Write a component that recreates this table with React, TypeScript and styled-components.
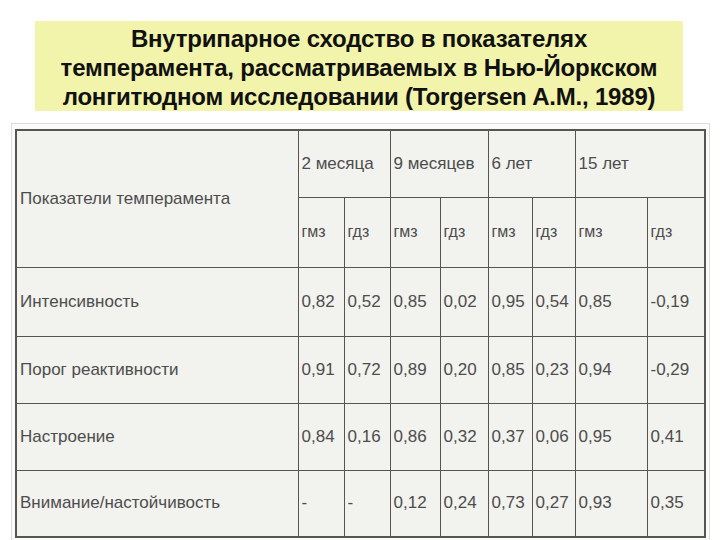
import { Fragment } from "react";
import styled, { createGlobalStyle } from "styled-components";

const GlobalStyle = createGlobalStyle`
  html, body {
    margin: 0;
    padding: 0;
    background: #ffffff;
  }
`;

const Page = styled.div`
  width: 720px;
  height: 540px;
  overflow: hidden;
  display: flex;
  flex-direction: column;
  align-items: flex-start;
  font-family: "Liberation Sans", Arial, sans-serif;
`;

const TitleBox = styled.div`
  margin: 21px 0 0 35px;
  width: 648px;
  height: 90px;
  background: #f2f4ab;
  display: flex;
  align-items: center;
  justify-content: center;
`;

const Title = styled.h1`
  margin: 2px 0 0;
  font-size: 24px;
  line-height: 29px;
  font-weight: bold;
  color: #111;
  text-align: center;
  letter-spacing: -0.2px;
`;

const Frame = styled.div`
  margin: 12px 0 0 11px;
  padding: 5px 3px 2px 3px;
  border: 1px solid #dcdcdc;
  border-bottom: none;
  background: #fbfbfa;
`;

const Table = styled.table`
  border-collapse: collapse;
  table-layout: fixed;
  width: 689px;
  background: #f2f2ee;
  color: #4d4d4d;
  font-size: 17px;
  border: 2px solid #555;
`;

const Cell = styled.td<{ $small?: boolean }>`
  border: 1px solid #555;
  padding: 0 0 0 3px;
  vertical-align: middle;
  text-align: left;
  white-space: nowrap;
  overflow: hidden;
  font-size: ${(p) => (p.$small ? "16px" : "17px")};
  font-weight: normal;
`;

const Row = styled.tr<{ $h: number }>`
  height: ${(p) => p.$h}px;
`;

const widths = [282, 46, 46, 50, 48, 44, 43, 72, 58];
const periods = ["2 месяца", "9 месяцев", "6 лет", "15 лет"];

const rows: { name: string; values: string[]; h: number }[] = [
  { name: "Интенсивность", values: ["0,82", "0,52", "0,85", "0,02", "0,95", "0,54", "0,85", "-0,19"], h: 69 },
  { name: "Порог реактивности", values: ["0,91", "0,72", "0,89", "0,20", "0,85", "0,23", "0,94", "-0,29"], h: 67 },
  { name: "Настроение", values: ["0,84", "0,16", "0,86", "0,32", "0,37", "0,06", "0,95", "0,41"], h: 67 },
  { name: "Внимание/настойчивость", values: ["-", "-", "0,12", "0,24", "0,73", "0,27", "0,93", "0,35"], h: 67 },
];

export default function App() {
  return (
    <Page>
      <GlobalStyle />
      <TitleBox>
        <Title>
          Внутрипарное сходство в показателях
          <br />
          темперамента, рассматриваемых в Нью-Йоркском
          <br />
          лонгитюдном исследовании (Torgersen A.M., 1989)
        </Title>
      </TitleBox>
      <Frame>
        <Table>
          <colgroup>
            {widths.map((w, i) => (
              <col key={i} style={{ width: w }} />
            ))}
          </colgroup>
          <tbody>
            <Row $h={67}>
              <Cell as="th" rowSpan={2}>
                Показатели темперамента
              </Cell>
              {periods.map((p) => (
                <Cell as="th" key={p} colSpan={2}>
                  {p}
                </Cell>
              ))}
            </Row>
            <Row $h={70}>
              {periods.map((p) => (
                <Fragment key={p}>
                  <Cell as="th" $small>гмз</Cell>
                  <Cell as="th" $small>гдз</Cell>
                </Fragment>
              ))}
            </Row>
            {rows.map((r) => (
              <Row $h={r.h} key={r.name}>
                <Cell>{r.name}</Cell>
                {r.values.map((v, i) => (
                  <Cell key={i}>{v}</Cell>
                ))}
              </Row>
            ))}
          </tbody>
        </Table>
      </Frame>
    </Page>
  );
}
